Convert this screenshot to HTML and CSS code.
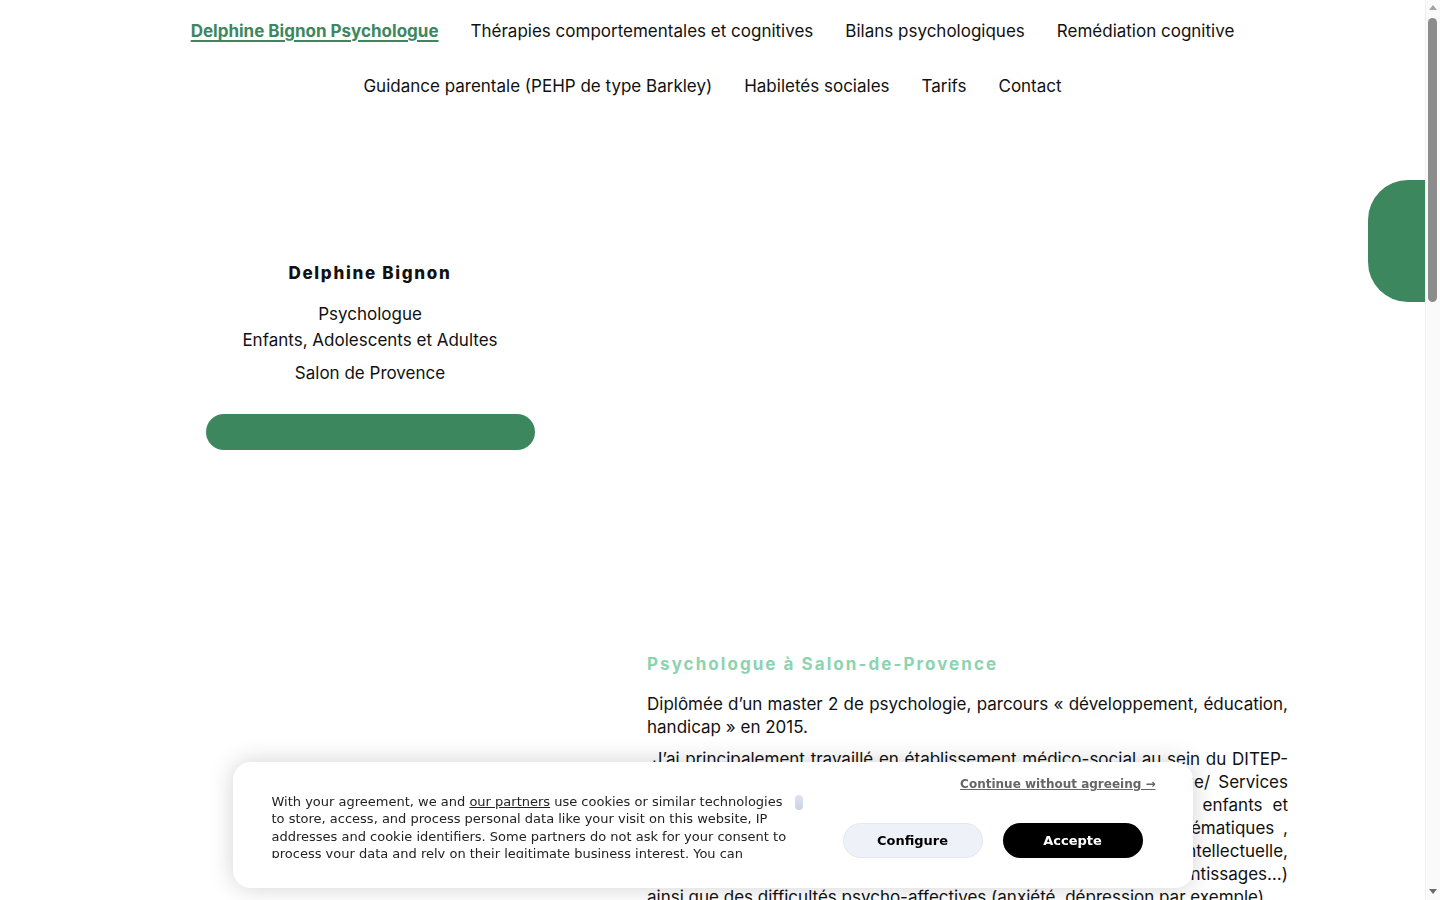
FILE: index.html
```html
<!doctype html>
<html lang="fr">
<head>
<meta charset="utf-8">
<meta name="viewport" content="width=device-width, initial-scale=1">
<title>Delphine Bignon Psychologue</title>
<link rel="stylesheet" href="styles.css">
</head>
<body>
    <header class="site-header">
        <nav class="main-nav">
            <ul>
                <li><a class="brand" href="#">Delphine Bignon Psychologue</a></li>
                <li><a href="#">Thérapies comportementales et cognitives</a></li>
                <li><a href="#">Bilans psychologiques</a></li>
                <li><a href="#">Remédiation cognitive</a></li>
                <li class="row-break"></li>
                <li><a href="#">Guidance parentale (PEHP de type Barkley)</a></li>
                <li><a href="#">Habiletés sociales</a></li>
                <li><a href="#">Tarifs</a></li>
                <li><a href="#">Contact</a></li>
            </ul>
        </nav>
    </header>

    <main>
        <section class="hero">
            <div class="profile">
                <h2 class="profile-name">Delphine Bignon</h2>
                <p>Psychologue<br>Enfants, Adolescents et Adultes</p>
                <p>Salon de Provence</p>
                <a class="btn-rdv" href="#"></a>
            </div>
            <div class="hero-media"></div>
        </section>

        <section class="intro">
            <div class="intro-side"></div>
            <div class="intro-text">
                <h3>Psychologue à Salon-de-Provence</h3>
                <p>Diplômée d’un master 2 de psychologie, parcours « développement, éducation, handicap » en 2015.</p>
                <p>&nbsp;J’ai principalement travaillé en établissement médico-social au sein du DITEP-SESSAD (Dispositif Institut Thérapeutique Éducatif et Pédagogique/ Services d’Éducation Spéciale et de Soins À Domicile) qui accueille des enfants et adolescents qui présentent des troubles du comportement problématiques , des troubles du neurodéveloppement (TSA, TDAH, déficience intellectuelle, troubles spécifiques du langage oral et écrit, troubles des apprentissages…) ainsi que des difficultés psycho-affectives (anxiété, dépression par exemple).</p>
                <p>Depuis 2019, j’exerce en libéral à Salon-de-Provence où je reçois les enfants, les adolescents et les adultes pour des bilans psychologiques, des suivis individuels et des accompagnements parentaux.</p>
                <p>Formée aux thérapies comportementales et cognitives, je propose des prises en charge structurées, centrées sur les difficultés actuelles et sur des objectifs définis ensemble.</p>
                <p>Je travaille en lien avec les familles, les écoles et les différents professionnels qui accompagnent l’enfant (orthophonistes, psychomotriciens, ergothérapeutes, médecins…).</p>
                <p>Les consultations ont lieu au cabinet, sur rendez-vous, du lundi au samedi.</p>
            </div>
        </section>

        <section class="practice">
            <div class="intro-side"></div>
            <div class="intro-text">
                <h3>Les consultations</h3>
                <p>Les séances durent en moyenne 45 minutes. Le premier rendez-vous permet de faire connaissance, de recueillir la demande et de définir ensemble les modalités de l’accompagnement.</p>
                <p>Les bilans psychologiques (évaluation intellectuelle, attentionnelle, mnésique, des fonctions exécutives ou de la personnalité) donnent lieu à un compte rendu écrit et à un entretien de restitution.</p>
                <p>Les séances de psychologie ne sont pas remboursées par la sécurité sociale, mais certaines mutuelles les prennent en charge. Une facture vous est remise à chaque séance.</p>
            </div>
        </section>

        <footer class="site-footer">
            <p>Delphine Bignon · Psychologue · Salon-de-Provence</p>
        </footer>
    </main>

    <a class="side-tab" href="#" aria-label="Prendre rendez-vous"></a>

    <!-- window scrollbar, drawn because the capture hides the real one -->
    <div class="scroll-rail">
        <span class="scroll-up"></span>
        <span class="scroll-thumb"></span>
        <span class="scroll-down"></span>
    </div>

    <div class="cookie-layer">
        <div class="cookie-banner">
            <div class="cookie-text">
                <div class="cookie-scroll">
                    <p>With your agreement, we and <a href="#">our partners</a> use cookies or similar technologies to store, access, and process personal data like your visit on this website, IP addresses and cookie identifiers. Some partners do not ask for your consent to process your data and rely on their legitimate business interest. You can withdraw your consent or object to data processing based on legitimate interest at any time by clicking on "Learn More" or in our privacy policy on this website.</p>
                    <p>We and our partners do the following data processing: Analyse your navigation, Measure advertising performance, Measure content performance, Personalised advertising and content, advertising and content measurement, audience research and services development, Store and/or access information on a device.</p>
                </div>
            </div>
            <div class="cookie-actions">
                <a class="cookie-skip" href="#">Continue without agreeing →</a>
                <div class="cookie-buttons">
                    <button class="btn-configure">Configure</button>
                    <button class="btn-accept">Accepte</button>
                </div>
            </div>
        </div>
    </div>
</body>
</html>
```

FILE: styles.css
```css
html, body {
    margin: 0;
    padding: 0;
}
body {
    padding-right: 15px;
    font-family: Inter, sans-serif;
    font-size: 17px;
    color: #111;
    background: #fff;
}
a {
    color: inherit;
    text-decoration: none;
}

/* navigation */
.main-nav ul {
    display: flex;
    flex-wrap: wrap;
    justify-content: center;
    column-gap: 32px;
    margin: 0;
    padding: 19px 0 0;
    list-style: none;
    line-height: 24px;
}
.main-nav .row-break {
    flex-basis: 100%;
    height: 31px;
}
.main-nav .brand {
    color: #3c875e;
    font-weight: 700;
    text-decoration: underline;
    text-decoration-thickness: 2px;
    text-underline-offset: 3px;
}

/* hero */
.hero,
.intro,
.practice {
    display: grid;
    grid-template-columns: 360px 1fr;
    column-gap: 97px;
    padding: 0 137px 0 190px;
}
.hero {
    height: 554px;
}
.profile {
    padding-top: 163px;
    text-align: center;
}
.profile-name {
    margin: 0 0 16px;
    font-size: 17px;
    font-weight: 800;
    letter-spacing: 1.7px;
    line-height: 24px;
}
.profile p {
    margin: 0 0 7px;
    line-height: 26px;
}
.btn-rdv {
    display: block;
    width: 329px;
    height: 36px;
    margin: 28px auto 0;
    border-radius: 18px;
    background: #3c875e;
}

/* text sections */
.intro-text h3 {
    margin: 0 0 17px;
    color: #8dd3b0;
    font-size: 17px;
    font-weight: 700;
    letter-spacing: 2.05px;
    line-height: 24px;
}
.intro-text p {
    margin: 0 0 9px;
    line-height: 23px;
    text-align: justify;
}
.practice {
    padding-top: 60px;
}
.site-footer {
    padding: 120px 0 700px;
    text-align: center;
    font-size: 14px;
}

/* fixed side tab */
.side-tab {
    position: fixed;
    top: 180px;
    right: 15px;
    width: 57px;
    height: 122px;
    border-radius: 40px 0 0 40px;
    background: #3c875e;
}

/* window scrollbar */
.scroll-rail {
    position: fixed;
    top: 0;
    right: 0;
    bottom: 0;
    width: 15px;
    background: #fafafa;
    border-left: 1px solid #f0f0f0;
    box-sizing: border-box;
}
.scroll-up,
.scroll-down {
    position: absolute;
    left: 3px;
    width: 0;
    height: 0;
    border-left: 4.5px solid transparent;
    border-right: 4.5px solid transparent;
}
.scroll-up {
    top: 5px;
    border-bottom: 5px solid #a3a3a3;
}
.scroll-down {
    bottom: 6px;
    border-top: 5px solid #6b6b6b;
}
.scroll-thumb {
    position: absolute;
    top: 18px;
    left: 2px;
    width: 9px;
    height: 284px;
    border-radius: 5px;
    background: #8c8c8c;
}

/* cookie banner */
.cookie-layer {
    position: fixed;
    left: 0;
    right: 15px;
    bottom: 12px;
    display: flex;
    justify-content: center;
}
.cookie-banner {
    width: 960px;
    height: 126px;
    box-sizing: border-box;
    display: flex;
    align-items: flex-start;
    justify-content: space-between;
    padding: 14px 50px 0 39px;
    border-radius: 18px;
    background: #fff;
    box-shadow: 0 0 24px rgba(0, 0, 0, 0.18);
    font-family: "DejaVu Sans", sans-serif;
    font-size: 13px;
    color: #222;
}
.cookie-text {
    position: relative;
    width: 531px;
    height: 65px;
    margin-top: 17px;
    overflow: hidden;
    line-height: 17.4px;
}
.cookie-text::after {
    content: "";
    position: absolute;
    top: 2px;
    right: 0;
    width: 8px;
    height: 15px;
    border-radius: 4px;
    background: linear-gradient(#dde4ee, #c9d3e0);
}
.cookie-scroll p {
    margin: 0 0 10px;
    padding-right: 14px;
}
.cookie-scroll a {
    text-decoration: underline;
}
.cookie-actions {
    display: flex;
    flex-direction: column;
    width: 300px;
}
.cookie-skip {
    align-self: flex-end;
    margin-right: -13px;
    color: #666;
    font-size: 12px;
    font-weight: 700;
    text-decoration: underline;
    line-height: 17px;
}
.cookie-buttons {
    display: flex;
    justify-content: space-between;
    margin-top: 30px;
}
.cookie-buttons button {
    width: 140px;
    height: 35px;
    border-radius: 18px;
    font-family: "DejaVu Sans", sans-serif;
    font-size: 13px;
    font-weight: 700;
    cursor: pointer;
}
.btn-configure {
    border: 1px solid #e3e8ef;
    background: #eef2f8;
    color: #000;
}
.btn-accept {
    border: 0;
    background: #000;
    color: #fff;
}
```
